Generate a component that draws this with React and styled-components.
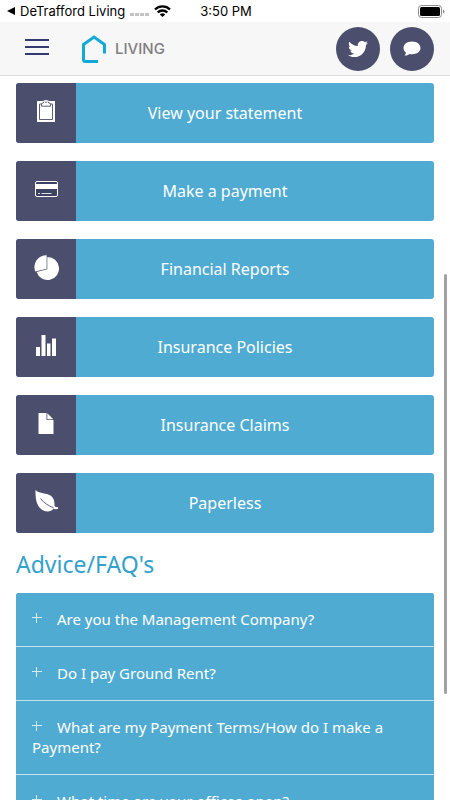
import React from "react";
import styled, { createGlobalStyle } from "styled-components";
import { FaTwitter } from "react-icons/fa";

const navy = "#4b4f6d";
const sky = "#50abd2";

const GlobalStyle = createGlobalStyle`
  *, *::before, *::after { box-sizing: border-box; }
  body { margin: 0; background: #fff; font-family: "Noto Sans", "Open Sans", sans-serif; }
  button { font: inherit; border: 0; padding: 0; cursor: pointer; }
  svg { display: block; }
`;

const Screen = styled.div`
  position: relative;
  display: flex;
  flex-direction: column;
  height: 100vh;
  overflow: hidden;
`;

const StatusBar = styled.div`
  display: grid;
  grid-template-columns: 1fr auto 1fr;
  align-items: center;
  height: 22px;
  flex: none;
  padding: 0 5px 0 7px;
  color: #000;
  font: 13px/22px Inter, sans-serif;
  white-space: nowrap;
`;

const StatusGroup = styled.div`
  display: flex;
  align-items: center;
  gap: 5px;
  justify-content: ${(p) => (p.$end ? "flex-end" : "flex-start")};
`;

const BackLink = styled.a`
  display: flex;
  align-items: center;
  gap: 5px;
  color: inherit;
  text-decoration: none;
`;

const Header = styled.header`
  display: flex;
  align-items: center;
  flex: none;
  height: 54px;
  padding: 0 16px 0 25px;
  background: #f7f7f7;
  border-bottom: 1px solid #dcdcdc;
`;

const MenuButton = styled.button`
  display: flex;
  flex-direction: column;
  gap: 5px;
  width: 24px;
  margin-bottom: 4px;
  background: none;
`;

const MenuLine = styled.span`
  height: 2px;
  width: 100%;
  background: #343970;
`;

const Brand = styled.a`
  display: flex;
  align-items: center;
  gap: 9px;
  margin-left: 33px;
  color: #808080;
  font: 500 15px/20px Inter, sans-serif;
  text-decoration: none;
`;

const HeaderActions = styled.div`
  display: flex;
  gap: 10px;
  margin-left: auto;
`;

const RoundButton = styled.button`
  display: grid;
  place-items: center;
  width: 44px;
  height: 44px;
  border-radius: 50%;
  background: ${navy};
  color: #fff;
`;

const Content = styled.main`
  flex: 1;
  min-height: 0;
  overflow-y: auto;
  scrollbar-width: none;
  padding: 7px 16px 0;
`;

const ActionList = styled.nav`
  display: flex;
  flex-direction: column;
  gap: 18px;
`;

const ActionButton = styled.button`
  display: grid;
  grid-template-columns: 60px 1fr 60px;
  align-items: center;
  height: 60px;
  width: 100%;
  overflow: hidden;
  border-radius: 3px;
  background: ${sky};
  color: #fff;
  font-size: 16px;
  line-height: 24px;
`;

const ActionIcon = styled.span`
  display: grid;
  place-items: center;
  height: 100%;
  padding-bottom: 4px;
  background: ${navy};
`;

const SectionTitle = styled.h2`
  margin: 16px 0 14px;
  color: #32a2cd;
  font-size: 23px;
  font-weight: 400;
  line-height: 30px;
`;

const FaqList = styled.div`
  overflow: hidden;
  border-radius: 3px 3px 0 0;
  background: ${sky};
`;

const FaqButton = styled.button`
  display: block;
  width: 100%;
  padding: 16px 16px 17px;
  border-bottom: 1px solid #c5e2f1;
  background: ${sky};
  color: #fff;
  font-size: 15px;
  line-height: 20px;
  text-align: left;
`;

const PlusIcon = styled.svg`
  display: inline-block;
  margin-right: 15px;
  vertical-align: 2px;
`;

const ScrollThumb = styled.div`
  position: absolute;
  top: 274px;
  right: 3px;
  width: 3px;
  height: 420px;
  border-radius: 2px;
  background: #a1a1a1;
`;

const ClipboardIcon = () => (
  <svg width="18" height="22" viewBox="0 0 18 22" aria-hidden="true">
    <path fill="#fff" d="M0 1h5.500C7 1 7 0 9 0s2 1 3.500 1H18v21H0z" />
    <path fill="none" stroke={navy} strokeWidth=".9" d="M4 4H2.500v15.500h13V4H14M4.500 3.500v2.700h9V3.500L11.700 3 11 1.500M4.500 3.500 6.300 3 7 1.500" />
    <circle cx="9" cy="2.300" r=".8" fill={navy} />
  </svg>
);

const CardIcon = () => (
  <svg width="23" height="16" viewBox="0 0 23 16" aria-hidden="true">
    <rect x=".5" y=".5" width="22" height="15" rx="1.500" fill="#3e4263" stroke="#fff" />
    <path fill="#fff" d="M1 3h21v5H1z" />
    <path stroke="#dfe1ea" d="M3 12.500h2M6.500 12.500h10" />
  </svg>
);

const PieIcon = () => (
  <svg width="25" height="25" viewBox="0 0 25 25" aria-hidden="true">
    <path fill="#fff" d="M13.300 2A11.500 11.500 0 1 1 2.600 17.100L13.300 14.300z" />
    <path fill="#fff" d="M12.600.200V13.700L1.200 16.400A12 12 0 0 1 12.600.200z" />
  </svg>
);

const BarsIcon = () => (
  <svg width="20" height="21" viewBox="0 0 20 21" aria-hidden="true">
    <path fill="#fff" d="M0 12h4v9H0zM5.500 0h4v21h-4zM11 8.500h3.500V21H11zM16 3.500h4V21h-4z" />
  </svg>
);

const FileIcon = () => (
  <svg width="16" height="21" viewBox="0 0 16 21" aria-hidden="true">
    <path fill="#fff" d="M.500 0H8.500v7h7v14H.500zM9.300.300l6 6h-6z" />
  </svg>
);

const LeafIcon = () => (
  <svg width="23" height="22" viewBox="0 0 23 22" aria-hidden="true">
    <path fill="#fff" d="M.500 0C4 3.500 10 3 14.500 5c4.500 2.200 5.300 7 5 11l1.500 1.300 2-.3v2l-3 .2-1.700-.5C16.500 21.500 13 22 9.500 21 2 18 .300 11 .500 0z" />
    <path fill="none" stroke={navy} strokeWidth=".9" d="M5.500 8.500C9 13 13 15.500 18.500 17.800" />
  </svg>
);

const LogoIcon = () => (
  <svg width="24" height="28" viewBox="0 0 24 28" aria-hidden="true">
    <path fill="none" stroke="#10a9d8" strokeWidth="3" d="M22.500 18.500V9.500L12 2 1.500 9.500v15q0 2 2 2h12.500" />
  </svg>
);

const ChatIcon = () => (
  <svg width="18" height="15" viewBox="0 0 18 15" aria-hidden="true">
    <path fill="#fff" d="M9 .5c5 0 8.500 2.800 8.500 6.500S14 13.200 9 13.200c-1 0-1.800-.1-2.600-.3-1.600 1.300-3.400 1.600-4.900 1.500 1-.8 1.400-1.900 1.400-3C1.300 10.300.500 8.700.500 7 .500 3.300 4 .5 9 .5z" />
  </svg>
);

const WifiIcon = () => (
  <svg width="17" height="12" viewBox="0 0 17 12" aria-label="Wi-Fi">
    <path fill="none" stroke="#000" strokeWidth="2.400" d="M1 4.500a10.600 10.600 0 0 1 15 0M3.700 7.500a6.800 6.800 0 0 1 9.600 0" />
    <path d="M8.500 12 5.800 9.500a3.800 3.800 0 0 1 5.400 0z" />
  </svg>
);

const SignalIcon = () => (
  <svg width="19" height="12" viewBox="0 0 19 12" aria-label="No signal">
    <path fill="#c4c4c4" d="M0 8h4v3H0zM5 8h4v3H5zM10 8h4v3h-4zM15 8h4v3h-4z" />
  </svg>
);

const BatteryIcon = () => (
  <svg width="27" height="13" viewBox="0 0 27 13" aria-label="Battery full">
    <rect x=".5" y=".5" width="23" height="12" rx="3" fill="none" stroke="#8c8c8c" />
    <rect x="2" y="2" width="20" height="9" rx="1.500" />
    <path fill="#8c8c8c" d="M25 4.500q1.500.5 1.500 2T25 8.500z" />
  </svg>
);

const actions = [
  ["View your statement", ClipboardIcon],
  ["Make a payment", CardIcon],
  ["Financial Reports", PieIcon],
  ["Insurance Policies", BarsIcon],
  ["Insurance Claims", FileIcon],
  ["Paperless", LeafIcon],
];

const questions = [
  "Are you the Management Company?",
  "Do I pay Ground Rent?",
  "What are my Payment Terms/How do I make a Payment?",
  "What time are your offices open?",
];

export default function App() {
  return (
    <Screen>
      <GlobalStyle />
      <StatusBar>
        <StatusGroup>
          <BackLink href="#back">
            <svg width="8" height="8" viewBox="0 0 8 8" aria-hidden="true">
              <path d="M8 0v8L0 4z" />
            </svg>
            DeTrafford Living
          </BackLink>
          <SignalIcon />
          <WifiIcon />
        </StatusGroup>
        <span>3:50 PM</span>
        <StatusGroup $end>
          <BatteryIcon />
        </StatusGroup>
      </StatusBar>
      <Header>
        <MenuButton aria-label="Menu">
          <MenuLine />
          <MenuLine />
          <MenuLine />
        </MenuButton>
        <Brand href="#home">
          <LogoIcon />
          LIVING
        </Brand>
        <HeaderActions>
          <RoundButton aria-label="Twitter">
            <FaTwitter size={20} />
          </RoundButton>
          <RoundButton aria-label="Messages">
            <ChatIcon />
          </RoundButton>
        </HeaderActions>
      </Header>
      <Content>
        <ActionList>
          {actions.map(([label, Icon]) => (
            <ActionButton key={label}>
              <ActionIcon>
                <Icon />
              </ActionIcon>
              <span>{label}</span>
            </ActionButton>
          ))}
        </ActionList>
        <SectionTitle>Advice/FAQ's</SectionTitle>
        <FaqList>
          {questions.map((question) => (
            <FaqButton key={question} aria-expanded="false">
              <PlusIcon width="10" height="10" viewBox="0 0 10 10" aria-hidden="true">
                <path stroke="#d8edf7" d="M0 4.500h10M4.500 0v10" />
              </PlusIcon>
              {question}
            </FaqButton>
          ))}
        </FaqList>
      </Content>
      <ScrollThumb />
    </Screen>
  );
}
